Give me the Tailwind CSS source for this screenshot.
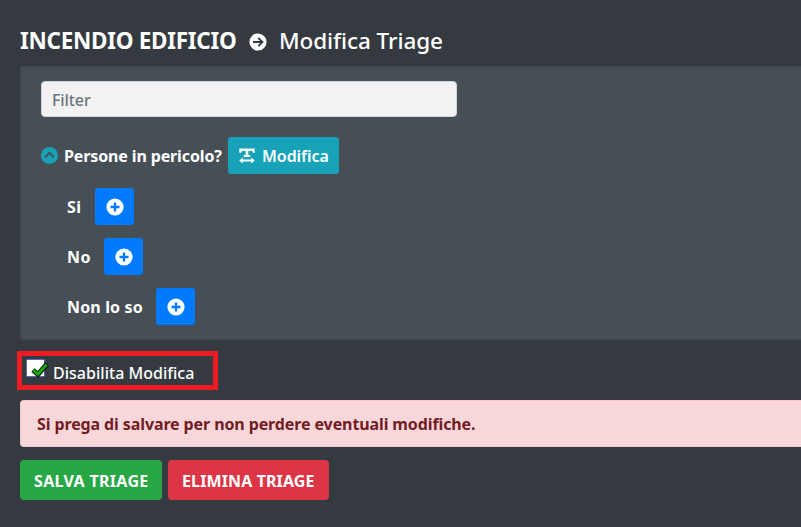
<!DOCTYPE html>
<html lang="it">
<head>
<meta charset="utf-8">
<title>Modifica Triage</title>
<script src="https://cdn.jsdelivr.net/npm/@tailwindcss/browser@4"></script>
</head>
<body class="h-[527px] overflow-hidden bg-[#343a40] font-['Noto_Sans','Open_Sans',sans-serif] text-[16px] leading-6 font-bold whitespace-nowrap text-white">
<svg class="hidden">
  <symbol id="plus" viewBox="0 0 18 18"><circle cx="9" cy="9" r="8.6" fill="#fff"/><path d="M9 4.5v9M4.5 9h9" stroke="#007bff" stroke-width="2.3"/></symbol>
</svg>
<main class="flex w-[801px] flex-col pl-5">
  <h1 class="flex h-[66px] items-center pt-[16px] text-[22.5px] leading-8">
    <span class="w-[229px] tracking-[-0.28px]">INCENDIO EDIFICIO</span>
    <svg class="mt-px h-[18px] w-[18px]" viewBox="0 0 18 18"><circle cx="9" cy="9" r="8.6" fill="#fff"/><path d="M4 9h9M9.3 4.8 13.5 9l-4.2 4.2" fill="none" stroke="#343a40" stroke-width="1.8"/></svg>
    <span class="ml-[12px] font-medium tracking-[-0.08px]">Modifica Triage</span>
  </h1>
  <section class="h-[274px] rounded-l-[3px] border border-r-0 border-[#40474e] bg-[#474f56] pt-[14px] pl-5">
    <input class="block h-9 w-[416px] rounded-[4px] border border-[#ced4da] bg-[#f2f2f2] px-[10px] pt-[2px] font-medium tracking-[-0.1px] text-[#6c757d] placeholder:text-[#6c757d]" placeholder="Filter">
    <div class="mt-5 flex h-[37px] items-center">
      <svg class="h-[17px] w-[17px]" viewBox="0 0 16 16"><circle cx="8" cy="8" r="8" fill="#17a2b8"/><path d="m3.8 9.7 4.2-4 4.2 4" fill="none" stroke="#474f56" stroke-width="2"/></svg>
      <span class="ml-[6px] w-[164px] tracking-[-0.13px]">Persone in pericolo?</span>
      <button class="flex h-[37px] w-[111px] items-center rounded-[3px] bg-[#17a2b8] pl-[11px] font-semibold">
        <svg class="h-4 w-4 shrink-0" viewBox="0 0 16 16" fill="#fff"><path d="M.3.5h15.4v4.2h-1.9L13.2 3H9.3v3.9h1.9v2H4.8v-2h1.9V3H2.8l-.6 1.7H.3zM3.8 9.4v2h8.4v-2l3.6 3.1-3.6 3.1v-2H3.8v2L.2 12.5z"/></svg>
        <span class="ml-[7px] tracking-[-0.05px]">Modifica</span>
      </button>
    </div>
    <ul class="mt-[14px] flex flex-col gap-[13px] pl-[26px]">
      <li class="flex h-[37px] items-center"><span class="w-[28px] tracking-[0.5px]">Si</span><button class="flex h-[37px] w-[39px] items-center justify-center rounded-[3px] bg-[#007bff]"><svg class="h-[18px] w-[18px]"><use href="#plus"/></svg></button></li>
      <li class="flex h-[37px] items-center"><span class="w-[37px] tracking-[0.5px]">No</span><button class="flex h-[37px] w-[39px] items-center justify-center rounded-[3px] bg-[#007bff]"><svg class="h-[18px] w-[18px]"><use href="#plus"/></svg></button></li>
      <li class="flex h-[37px] items-center"><span class="w-[89px] tracking-[0.15px]">Non lo so</span><button class="flex h-[37px] w-[39px] items-center justify-center rounded-[3px] bg-[#007bff]"><svg class="h-[18px] w-[18px]"><use href="#plus"/></svg></button></li>
    </ul>
  </section>
  <label class="mt-[11px] -ml-[3px] flex h-[39px] w-[201px] items-center border-[5px] border-[#ed1c24] pl-1 font-medium">
    <svg class="-mt-[4px] h-[19px] w-[24px]" viewBox="0 0 24 19"><rect x=".5" y=".5" width="18" height="17" fill="#fff" stroke="#2828d8" stroke-dasharray="1 1"/><path d="m7 11 5 4.5L21 5" fill="none" stroke="#082508" stroke-width="5"/><path d="m7.5 11.2 4.5 4L20.5 5.6" fill="none" stroke="#13b413" stroke-width="2.6"/></svg>
    <span class="mt-[4px] ml-[3px] tracking-[0.02px]">Disabilita Modifica</span>
  </label>
  <div class="mt-[10px] flex h-[47px] items-center rounded-l-[4px] border border-r-0 border-[#f5c6cb] bg-[#f8d7da] pl-[16px] tracking-[-0.11px] text-[#721c24]">Si prega di salvare per non perdere eventuali modifiche.</div>
  <div class="mt-[13px] flex gap-[6px]">
    <button class="flex h-10 w-[142px] items-center rounded-[4px] bg-[#28a745] pt-[2px] pl-[14px] tracking-[0.32px]">SALVA TRIAGE</button>
    <button class="flex h-10 w-[161px] items-center rounded-[4px] bg-[#dc3545] pt-[2px] pl-[14px] tracking-[0.12px]">ELIMINA TRIAGE</button>
  </div>
</main>
</body>
</html>
